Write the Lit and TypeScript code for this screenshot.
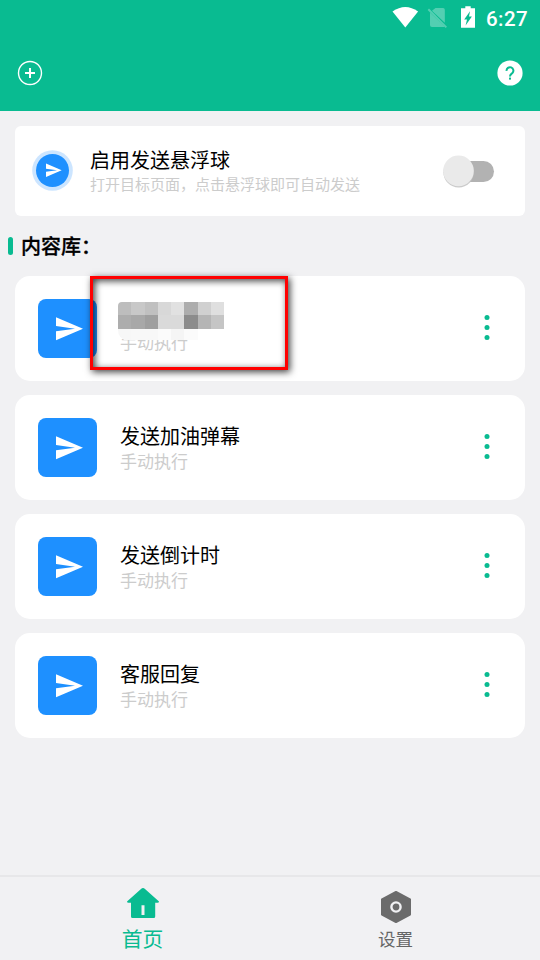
import { LitElement, html, css, svg } from "lit";
import { customElement, property } from "lit/decorators.js";

const plane = svg`<path d="M0 0 L27 11.5 L0 23 V14 L19 11.5 L0 8.8 Z" fill="#fff"/>`;

@customElement("status-bar")
class StatusBar extends LitElement {
  static styles = css`
    :host { display: flex; height: 36px; justify-content: flex-end; align-items: flex-start; }
    svg { display: block; flex: none; }
    .time { width: 54px; font: 500 20.5px/24px Roboto, sans-serif; color: #fff; padding-top: 7px; letter-spacing: 0.45px; white-space: nowrap; }
  `;
  render() {
    return html`
      <svg width="96" height="36" viewBox="390 0 96 36">
        <path d="M392.5 11.5 Q405.300 2.500 418.100 11.500 L405.300 27.500 Z" fill="#fff"/>
        <g fill="#fff" opacity="0.3">
          <path d="M435.500 8 H443 a1.800 1.800 0 0 1 1.800 1.800 V22.800 L432 10.800 Z"/>
          <path d="M430 12.500 L444.500 26.500 Q444 27 443 27 H432 a2 2 0 0 1 -2 -2 Z"/>
          <path d="M427.600 9.900 L429 8.600 L447 26.700 L445.600 28 Z"/>
        </g>
        <path fill-rule="evenodd" fill="#fff" d="M465.300 6.200 H470.700 V8.300 H475 V27.800 H461 V8.300 H465.300 Z M470 11.200 L464.200 19.600 H467 L465.600 25.400 L471.900 16.500 H469 Z"/>
      </svg>
      <div class="time">6:27</div>
    `;
  }
}

@customElement("content-item")
class ContentItem extends LitElement {
  @property() name = "";
  @property({ type: Boolean }) masked = false;
  static styles = css`
    :host { display: flex; align-items: center; height: 105px; background: #fff; border-radius: 15px; padding: 0 35px 0 23px; box-sizing: border-box; position: relative; }
    .icon { width: 59px; height: 59px; border-radius: 8px; background: #1e90ff; flex: none; display: block; }
    .text { flex: 1; margin-left: 23px; }
    .name { font-size: 20px; line-height: 28px; height: 28px; color: #000; }
    .mode { font-size: 17px; line-height: 22px; padding-bottom: 2px; color: #ccc; }
    .dots { width: 6px; height: 26px; display: block; margin-bottom: 1px; }
    .mask { position: absolute; left: 103px; top: 26px; width: 106px; height: 39px; }
    .mark { position: absolute; left: 75px; top: 0; width: 198px; height: 94px; box-sizing: border-box; border: 3px solid #f00; box-shadow: 2px 2px 7px rgba(0,0,0,.75), inset 2px 2px 7px rgba(0,0,0,.75); }
  `;
  render() {
    const rows = [
      ["#bdbdbd", "#c8c8c8", "#c0c0c0", "#d8d8d8", "#e1e1e1", "#adadad", "#d0d0d0", "#dfdfdf"],
      ["#adadad", "#a8a8a8", "#9f9f9f", "#dadada", "#dadada", "#8c8c8c", "#b5b5b5", "#c5c5c5"],
      ["#f7f7f7", "#f8f8f8", "#f8f8f8", "#fbfbfb", "#f5f5f5", "#fbfbfb"],
    ];
    return html`
      <svg class="icon" viewBox="0 0 59 59"><g transform="translate(18 18.300)">${plane}</g></svg>
      <div class="text">
        <div class="name">${this.name}</div>
        <div class="mode">手动执行</div>
      </div>
      <svg class="dots" viewBox="0 0 6 26" fill="#09bb91">
        <circle cx="3" cy="2.500" r="2.500"/><circle cx="3" cy="12.500" r="2.500"/><circle cx="3" cy="22.500" r="2.500"/>
      </svg>
      ${this.masked ? html`
        <svg class="mask" viewBox="0 0 106 39">
          <defs><clipPath id="c"><path d="M4 0 H106 V27 H80 V39 H10 Q0 37 0 28 V4 Q0 0 4 0 Z"/></clipPath></defs>
          <g clip-path="url(#c)" shape-rendering="crispEdges">
            ${rows.map((r, y) => r.map((c, x) => svg`<rect x=${x * 13.25} y=${y * 13.3} width="13.300" height=${y === 2 ? 11 : 13.3} fill=${c}/>`))}
          </g>
        </svg>
        <div class="mark"></div>` : ""}
    `;
  }
}

@customElement("app-root")
class AppRoot extends LitElement {
  static styles = css`
    :host { display: flex; flex-direction: column; width: 540px; height: 960px; background: #f1f1f3; font-family: "Noto Sans CJK SC", sans-serif; overflow: hidden; }
    svg { display: block; flex: none; }
    header { height: 111px; background: #09bb91; flex: none; }
    .tools { display: flex; justify-content: space-between; padding: 24px 17px 0; }
    main { flex: 1; padding: 15px 15px 0; }
    .float { height: 90px; background: #fff; border-radius: 6px; display: flex; align-items: center; padding: 0 30px 0 17px; box-sizing: border-box; }
    .ball { margin-bottom: 2px; }
    .copy { flex: 1; margin-left: 17px; padding-bottom: 2px; }
    .title { font-size: 20px; line-height: 27px; color: #000; }
    .hint { font-size: 15px; line-height: 22px; color: #ccc; }
    .section { display: flex; align-items: center; height: 60px; margin-left: -7px; gap: 8px; font-size: 20px; font-weight: 500; color: #000; }
    .heading { padding-bottom: 2px; -webkit-text-stroke: 0.3px #000; }
    .bar { width: 5px; height: 18px; border-radius: 2.5px; background: #09bb91; }
    .list { display: flex; flex-direction: column; gap: 14px; }
    nav { height: 85px; box-sizing: border-box; border-top: 2px solid #e7e7e9; display: flex; padding: 0 18px 0 16px; flex: none; }
    .tab { flex: 1; display: flex; flex-direction: column; align-items: center; color: #666; }
    .tab svg { margin-top: 14px; }
    .label { font-size: 17.5px; line-height: 24px; margin-top: 4px; }
    .active { color: #09bb91; }
    .active svg { margin-top: 11px; }
    .active .label { font-size: 20.8px; line-height: 28px; margin-top: 6px; }
  `;
  render() {
    return html`
      <header>
        <status-bar></status-bar>
        <div class="tools">
          <svg width="26" height="26" viewBox="0 0 26 26" fill="none" stroke="#fff"><circle cx="13" cy="13" r="11.500" stroke-width="1.400"/><path d="M8 13 H18 M13 8 V18" stroke-width="2"/></svg>
          <svg width="26" height="26" viewBox="0 0 26 26"><circle cx="13" cy="13" r="12.600" fill="#fff"/><path d="M9.600 10.900 a3.400 3.400 0 1 1 5.800 2.100 C14 14.200 13 14.500 13 16.600" fill="none" stroke="#09bb91" stroke-width="2"/><rect x="12" y="17.600" width="2" height="2" fill="#09bb91"/></svg>
        </div>
      </header>
      <main>
        <section class="float">
          <svg class="ball" width="41" height="41" viewBox="0 0 41 41"><circle cx="20.500" cy="20.500" r="20.300" fill="#cce5ff"/><circle cx="20.500" cy="20.500" r="16.500" fill="#1e90ff"/><g transform="translate(14 13.600) scale(.58)">${plane}</g></svg>
          <div class="copy">
            <div class="title">启用发送悬浮球</div>
            <div class="hint">打开目标页面，点击悬浮球即可自动发送</div>
          </div>
          <svg width="54" height="36" viewBox="0 0 54 36">
            <rect x="14" y="8" width="39" height="21" rx="10.500" fill="#b2b2b2"/>
            <circle cx="17.700" cy="19.300" r="15.300" fill="#bdbdbd" opacity=".8"/>
            <circle cx="17.500" cy="17.900" r="15.300" fill="#eaeaea"/>
          </svg>
        </section>
        <div class="section"><span class="bar"></span><span class="heading">内容库：</span></div>
        <div class="list">
          <content-item name="" masked></content-item>
          <content-item name="发送加油弹幕"></content-item>
          <content-item name="发送倒计时"></content-item>
          <content-item name="客服回复"></content-item>
        </div>
      </main>
      <nav>
        <div class="tab active">
          <svg width="32" height="30" viewBox="0 0 32 30"><path fill-rule="evenodd" fill="#09bb91" d="M16 0 Q17 0 18 1 L32 13.500 Q32 14.700 30.500 14.700 H28.200 V28.500 Q28.200 30 26.700 30 H5.500 Q4 30 4 28.500 V14.700 H1.500 Q0 14.700 0 13.500 L14 1 Q15 0 16 0 Z M14.500 17.200 V27 H17.500 V17.200 Z"/></svg>
          <div class="label">首页</div>
        </div>
        <div class="tab">
          <svg width="30" height="32" viewBox="0 0 30 32"><path d="M15 1 L29 8.500 V23.500 L15 31 L1 23.500 V8.500 Z" fill="#6b6b6b" stroke="#6b6b6b" stroke-width="2" stroke-linejoin="round"/><circle cx="15" cy="16" r="4.600" fill="none" stroke="#f1f1f3" stroke-width="2.400"/></svg>
          <div class="label">设置</div>
        </div>
      </nav>
    `;
  }
}
